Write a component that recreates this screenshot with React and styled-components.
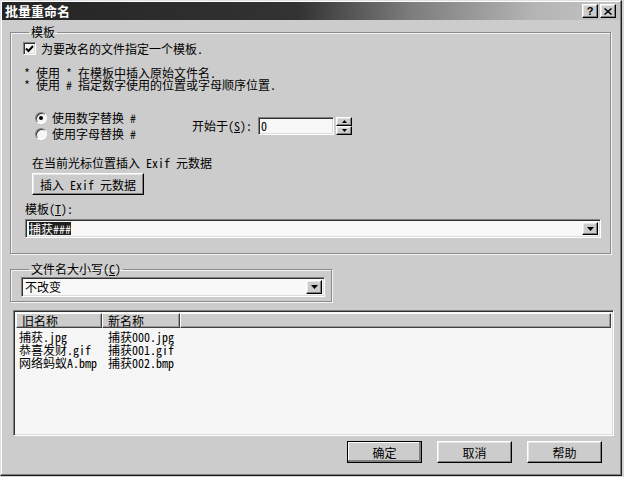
import React from 'react';
import styled, { createGlobalStyle } from 'styled-components';

const FONT = `"Noto Sans Mono CJK SC", "Noto Sans CJK SC", "Liberation Mono", monospace`;

const GlobalStyle = createGlobalStyle`
  html, body {
    margin: 0;
    padding: 0;
    background: #d4d4d4;
  }
  body {
    font-family: ${FONT};
    font-size: 12px;
    line-height: 12px;
    color: #000;
  }
`;

const raised = `
  border: 1px solid;
  border-color: #ffffff #000000 #000000 #ffffff;
  box-shadow: inset -1px -1px 0 #808080, inset 1px 1px 0 #e6e6e6;
`;

const sunken = `
  border: 1px solid;
  border-color: #808080 #ffffff #ffffff #808080;
  box-shadow: inset 1px 1px 0 #303030, inset -1px -1px 0 #dcdcdc;
`;

const Window = styled.div`
  width: 622px;
  height: 476px;
  box-sizing: border-box;
  background: #cccccc;
  border: 1px solid;
  border-color: #e0e0e0 #1c1c1c #1c1c1c #e0e0e0;
  box-shadow: inset -1px -1px 0 #808080, inset 1px 1px 0 #ffffff;
  padding: 1px;
  display: flex;
  flex-direction: column;
`;

const TitleBar = styled.div`
  height: 18px;
  display: flex;
  align-items: center;
  padding: 0 4px 0 3px;
  background: linear-gradient(to right, #242424 0%, #333333 48%, #7c7c7c 66%, #b4b4b4 86%, #c4c4c4 100%);
`;

const Title = styled.span`
  flex: 1;
  color: #ffffff;
  font-family: "Noto Sans CJK SC", sans-serif;
  font-weight: 700;
  font-size: 13px;
  line-height: 18px;
`;

const CaptionButton = styled.div`
  width: 14px;
  height: 12px;
  margin-left: ${({ gap }) => gap || 0}px;
  background: #cccccc;
  ${raised};
  display: flex;
  align-items: center;
  justify-content: center;
  font-family: "Liberation Sans", sans-serif;
  font-weight: 700;
  font-size: 11px;
`;

const Content = styled.div`
  flex: 1;
  display: flex;
  flex-direction: column;
  padding: 5px 0 0 8px;
`;

const Group = styled.fieldset`
  margin: ${({ mt }) => mt || 0}px 0 0 0;
  padding: 0 7px 0 12px;
  width: ${({ w }) => w}px;
  height: ${({ h }) => h}px;
  box-sizing: border-box;
  border: 1px solid #8a8a8a;
  box-shadow: 1px 1px 0 #f4f4f4, inset 1px 1px 0 #f4f4f4;
  min-width: 0;
`;

const Legend = styled.legend`
  padding: 0 2px;
  margin-left: 6px;
  line-height: 14px;
  font-size: 12px;
`;

const CheckRow = styled.label`
  display: flex;
  align-items: center;
  gap: 5px;
  margin-top: 3px;
  height: 13px;
`;

const CheckBox = styled.span`
  width: 13px;
  height: 13px;
  box-sizing: border-box;
  background: #f6f6f6;
  ${sunken};
  display: flex;
  align-items: center;
  justify-content: center;
`;

const Notes = styled.div`
  margin: 12px 0 0 1px;
  line-height: 12px;
  white-space: pre;
`;

const ModeRow = styled.div`
  display: flex;
  align-items: center;
  margin: 19px 0 0 12px;
`;

const Radios = styled.div`
  width: 157px;
  display: flex;
  flex-direction: column;
`;

const RadioRow = styled.label`
  display: flex;
  align-items: center;
  gap: 5px;
  height: 16px;
`;

const RadioDot = styled.span`
  width: 12px;
  height: 12px;
  box-sizing: border-box;
  border-radius: 50%;
  background: #f6f6f6;
  border: 1px solid;
  border-color: #808080 #ffffff #ffffff #808080;
  box-shadow: inset 1px 1px 0 #303030;
  display: flex;
  align-items: center;
  justify-content: center;
  &::after {
    content: '';
    width: 4px;
    height: 4px;
    border-radius: 50%;
    background: ${({ on }) => (on ? '#000' : 'transparent')};
  }
`;

const StartLabel = styled.span`
  width: 66px;
`;

const SpinInput = styled.div`
  width: 76px;
  height: 18px;
  box-sizing: border-box;
  background: #f8f8f8;
  ${sunken};
  padding: 2px 0 0 2px;
`;

const Spinner = styled.div`
  margin-left: 2px;
  width: 16px;
  height: 18px;
  display: flex;
  flex-direction: column;
`;

const SpinHalf = styled.div`
  flex: 1;
  box-sizing: border-box;
  ${raised};
  background: #cccccc;
  display: flex;
  align-items: center;
  justify-content: center;
`;

const Caption = styled.div`
  margin: ${({ mt }) => mt}px 0 0 ${({ ml }) => ml}px;
  line-height: 12px;
`;

const PushButton = styled.button`
  font-family: ${FONT};
  font-size: 12px;
  color: #000;
  background: #cccccc;
  width: ${({ w }) => w}px;
  height: 22px;
  box-sizing: border-box;
  ${raised};
  ${({ primary }) =>
    primary &&
    `outline: 1px solid #000; outline-offset: -1px;
     box-shadow: inset -2px -2px 0 #808080, inset 1px 1px 0 #ffffff;`}
  padding: 0;
  margin: ${({ mt }) => mt || 0}px 0 0 ${({ ml }) => ml || 0}px;
  display: flex;
  align-items: center;
  justify-content: center;
`;

const Combo = styled.div`
  width: ${({ w }) => w}px;
  height: ${({ h }) => h}px;
  margin: ${({ mt }) => mt}px 0 0 ${({ ml }) => ml}px;
  box-sizing: border-box;
  background: #f8f8f8;
  ${sunken};
  display: flex;
  align-items: stretch;
  padding: 2px;
`;

const ComboText = styled.div`
  flex: 1;
  display: flex;
  align-items: center;
  padding-left: 1px;
`;

const Selected = styled.span`
  background: #1e1e1e;
  color: #ffffff;
  line-height: 13px;
`;

const DropButton = styled.div`
  width: 16px;
  box-sizing: border-box;
  ${raised};
  background: #cccccc;
  display: flex;
  align-items: center;
  justify-content: center;
`;

const ListView = styled.div`
  margin: 8px 0 0 3px;
  width: 601px;
  height: 126px;
  box-sizing: border-box;
  background: #f6f6f6;
  ${sunken};
  padding: 2px;
`;

const Header = styled.div`
  display: flex;
  height: 15px;
`;

const HeaderCell = styled.div`
  width: ${({ w }) => (w ? `${w}px` : 'auto')};
  flex: ${({ w }) => (w ? 'none' : 1)};
  box-sizing: border-box;
  background: #cccccc;
  border: 1px solid;
  border-color: #ffffff #404040 #404040 #ffffff;
  box-shadow: inset -1px -1px 0 #9a9a9a;
  padding: 1px 0 0 5px;
  line-height: 12px;
`;

const Rows = styled.div`
  margin-top: 2px;
  display: flex;
  flex-direction: column;
`;

const Row = styled.div`
  display: flex;
  height: 13px;
  line-height: 13px;
`;

const Cell = styled.div`
  width: ${({ w }) => w}px;
  padding-left: 3px;
  box-sizing: border-box;
  white-space: pre;
`;

const Footer = styled.div`
  display: flex;
  justify-content: flex-end;
  gap: 15px;
  margin: 5px 18px 0 0;
`;

const Arrow = () => (
  <svg width="7" height="4" viewBox="0 0 7 4">
    <path d="M0 0h7L3.5 4z" fill="#000" />
  </svg>
);

const SmallArrow = ({ up }) => (
  <svg width="5" height="3" viewBox="0 0 5 3">
    <path d={up ? 'M0 3h5L2.5 0z' : 'M0 0h5L2.5 3z'} fill="#000" />
  </svg>
);

const rows = [
  ['捕获.jpg', '捕获000.jpg'],
  ['恭喜发财.gif', '捕获001.gif'],
  ['网络蚂蚁A.bmp', '捕获002.bmp'],
];

const App = () => (
  <>
    <GlobalStyle />
    <Window>
      <TitleBar>
        <Title>批量重命名</Title>
        <CaptionButton>?</CaptionButton>
        <CaptionButton gap={2}>
          <svg width="8" height="7" viewBox="0 0 8 7">
            <path d="M0.5 0.5l7 6M7.5 0.5l-7 6" stroke="#000" strokeWidth="1.5" />
          </svg>
        </CaptionButton>
      </TitleBar>
      <Content>
        <Group w={601} h={229}>
          <Legend>模板</Legend>
          <CheckRow>
            <CheckBox>
              <svg width="9" height="8" viewBox="0 0 9 8">
                <path d="M1 3.5l2.5 2.5L8 1" stroke="#000" strokeWidth="2" fill="none" />
              </svg>
            </CheckBox>
            为要改名的文件指定一个模板.
          </CheckRow>
          <Notes>
            {'* 使用 * 在模板中插入原始文件名.\n* 使用 # 指定数字使用的位置或字母顺序位置.'}
          </Notes>
          <ModeRow>
            <Radios>
              <RadioRow>
                <RadioDot on />
                使用数字替换 #
              </RadioRow>
              <RadioRow>
                <RadioDot />
                使用字母替换 #
              </RadioRow>
            </Radios>
            <StartLabel>
              开始于(<u>S</u>):
            </StartLabel>
            <SpinInput>0</SpinInput>
            <Spinner>
              <SpinHalf>
                <SmallArrow up />
              </SpinHalf>
              <SpinHalf>
                <SmallArrow />
              </SpinHalf>
            </Spinner>
          </ModeRow>
          <Caption mt={15} ml={9}>
            在当前光标位置插入 Exif 元数据
          </Caption>
          <PushButton w={112} mt={4} ml={9}>
            插入 Exif 元数据
          </PushButton>
          <Caption mt={8} ml={2}>
            模板(<u>T</u>):
          </Caption>
          <Combo w={576} h={19} mt={4} ml={2}>
            <ComboText>
              <Selected>捕获###</Selected>
            </ComboText>
            <DropButton>
              <Arrow />
            </DropButton>
          </Combo>
        </Group>
        <Group w={322} h={40} mt={8}>
          <Legend>文件名大小写(<u>C</u>)</Legend>
          <Combo w={304} h={20} mt={1} ml={-2}>
            <ComboText>不改变</ComboText>
            <DropButton>
              <Arrow />
            </DropButton>
          </Combo>
        </Group>
        <ListView>
          <Header>
            <HeaderCell w={86}>旧名称</HeaderCell>
            <HeaderCell w={78}>新名称</HeaderCell>
            <HeaderCell />
          </Header>
          <Rows>
            {rows.map(([oldName, newName]) => (
              <Row key={oldName}>
                <Cell w={89}>{oldName}</Cell>
                <Cell w={90}>{newName}</Cell>
              </Row>
            ))}
          </Rows>
        </ListView>
        <Footer>
          <PushButton w={75} primary>
            确定
          </PushButton>
          <PushButton w={75}>取消</PushButton>
          <PushButton w={75}>帮助</PushButton>
        </Footer>
      </Content>
    </Window>
  </>
);

export default App;
